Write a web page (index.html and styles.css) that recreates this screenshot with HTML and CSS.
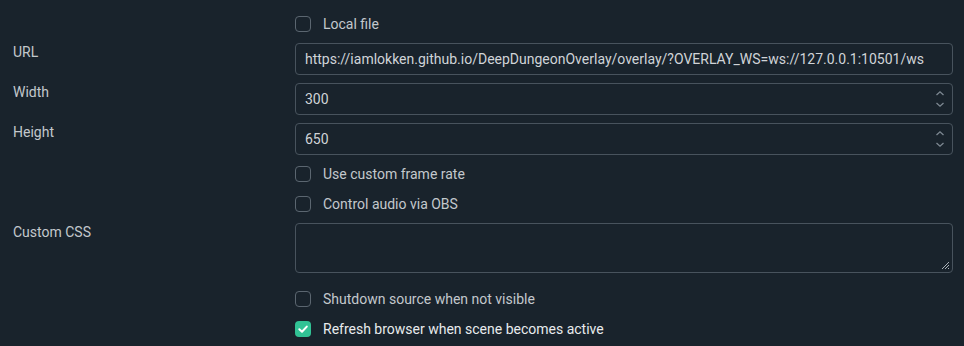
FILE: index.html
```html
<!DOCTYPE html>
<html>
<head>
<meta charset="utf-8">
<link rel="stylesheet" href="styles.css">
</head>
<body>
<div class="form">
  <div class="label"></div>
  <label class="check"><span class="box"></span><span class="ctext">Local file</span></label>

  <div class="label">URL</div>
  <div class="input"><span class="val">https://iamlokken.github.io/DeepDungeonOverlay/overlay/?OVERLAY_WS=ws://127.0.0.1:10501/ws</span></div>

  <div class="label">Width</div>
  <div class="input spin"><span class="val">300</span>
    <svg class="arrows" width="10" height="18" viewBox="0 0 10 18"><path d="M1.5 5 L5 1.8 L8.5 5 M1.5 13 L5 16.2 L8.5 13" fill="none" stroke="#7d8892" stroke-width="1.3"/></svg>
  </div>

  <div class="label">Height</div>
  <div class="input spin"><span class="val">650</span>
    <svg class="arrows" width="10" height="18" viewBox="0 0 10 18"><path d="M1.5 5 L5 1.8 L8.5 5 M1.5 13 L5 16.2 L8.5 13" fill="none" stroke="#7d8892" stroke-width="1.3"/></svg>
  </div>

  <div class="label"></div>
  <label class="check"><span class="box"></span><span class="ctext">Use custom frame rate</span></label>

  <div class="label"></div>
  <label class="check"><span class="box"></span><span class="ctext">Control audio via OBS</span></label>

  <div class="label">Custom CSS</div>
  <div class="textarea">
    <svg class="grip" width="9" height="9" viewBox="0 0 9 9"><path d="M1 8 L8 1 M4 8 L8 4 M7 8 L8 7" stroke="#a9b1b8" stroke-width="1" fill="none"/></svg>
  </div>

  <div class="label"></div>
  <label class="check"><span class="box"></span><span class="ctext">Shutdown source when not visible</span></label>

  <div class="label"></div>
  <label class="check on"><span class="box"><svg width="16" height="16" viewBox="0 0 16 16"><path d="M4.3 8.2 L7 10.7 L11.8 5.6" fill="none" stroke="#ffffff" stroke-width="2" stroke-linecap="round" stroke-linejoin="round"/></svg></span><span class="ctext">Refresh browser when scene becomes active</span></label>
</div>
</body>
</html>
```

FILE: styles.css
```css
html, body {
  margin: 0;
  padding: 0;
  background: #19232c;
  width: 964px;
  height: 346px;
  overflow: hidden;
}
body {
  font-family: Roboto, "Liberation Sans", sans-serif;
  font-size: 14px;
  color: #c3c8cc;
}
.form {
  display: grid;
  grid-template-columns: 282px 658px;
  column-gap: 0;
  row-gap: 8px;
  padding: 13px 11px 0 13px;
}
.label {
  align-self: start;
  padding-top: 1px;
  line-height: 17px;
  color: #c3c8cc;
}
.check {
  display: flex;
  align-items: center;
  gap: 12px;
  height: 22px;
}
.box {
  box-sizing: border-box;
  width: 16px;
  height: 16px;
  border: 1px solid #5b6670;
  border-radius: 4px;
  flex: none;
}
.check.on .box {
  border: none;
  background: #31c295;
}
.box svg { display: block; }
.ctext {
  color: #c3c8cc;
}
.check.on .ctext {
  color: #e8ebed;
}
.input {
  box-sizing: border-box;
  height: 32px;
  border: 1px solid #48535d;
  border-radius: 4px;
  display: flex;
  align-items: center;
  padding: 0 9px;
  color: #d0d4d8;
  position: relative;
  white-space: nowrap;
  overflow: hidden;
}
.spin .arrows {
  position: absolute;
  right: 7px;
  top: 6px;
}
.textarea {
  box-sizing: border-box;
  height: 50px;
  border: 1px solid #48535d;
  border-radius: 4px;
  position: relative;
  margin-bottom: 7px;
}
.grip {
  position: absolute;
  right: 2px;
  bottom: 2px;
}
```
